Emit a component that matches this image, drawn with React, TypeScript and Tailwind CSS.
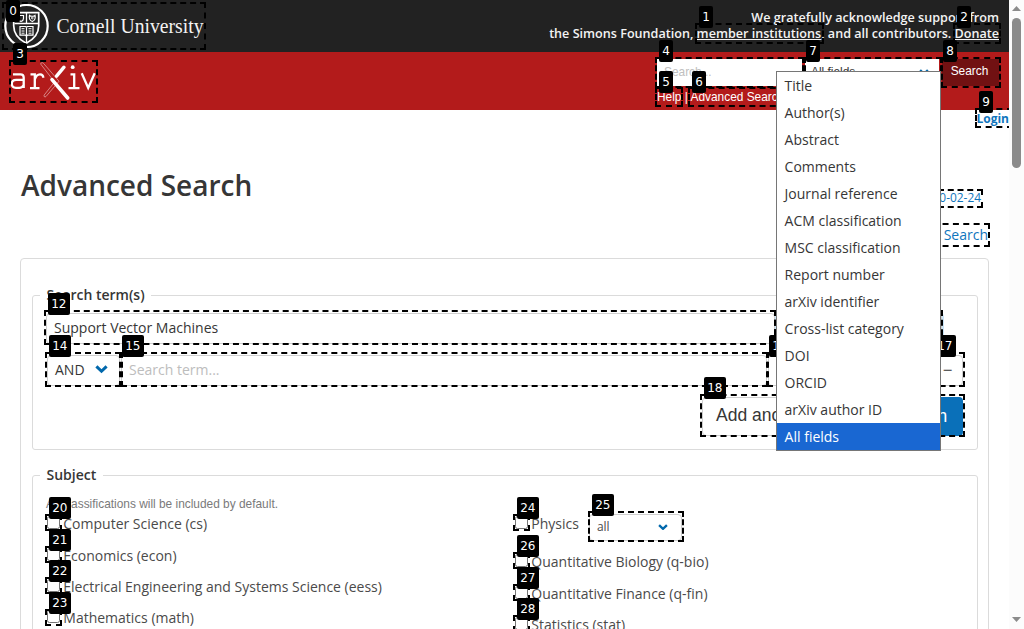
import React from "react";

type Mark = {
  id: number;
  box: [number, number, number, number];
  badge?: [number, number];
};

// box: left, top, right, bottom; badge: left, top
const marks: Mark[] = [
  { id: 0, box: [2, 2, 206, 50], badge: [6, 0] },
  { id: 1, box: [695, 23, 824, 44], badge: [699, 6] },
  { id: 2, box: [953, 23, 1001, 44], badge: [957, 6] },
  { id: 3, box: [9, 60, 98, 103], badge: [13, 43] },
  { id: 4, box: [655, 57, 804, 88], badge: [659, 40] },
  { id: 5, box: [655, 87, 683, 107], badge: [659, 71] },
  { id: 6, box: [688, 87, 786, 107], badge: [692, 71] },
  { id: 7, box: [804, 57, 942, 88], badge: [806, 40] },
  { id: 8, box: [941, 57, 1001, 88], badge: [943, 40] },
  { id: 9, box: [975, 108, 1013, 128], badge: [979, 91] },
  { id: 10, box: [860, 189, 983, 208] },
  { id: 11, box: [870, 223, 990, 247] },
  { id: 12, box: [44, 310, 776, 345], badge: [48, 293] },
  { id: 13, box: [774, 310, 943, 345] },
  { id: 14, box: [45, 352, 121, 387], badge: [49, 335] },
  { id: 15, box: [121, 352, 768, 387], badge: [122, 335] },
  { id: 16, box: [767, 352, 932, 387], badge: [769, 335] },
  { id: 17, box: [930, 352, 965, 387], badge: [934, 335] },
  { id: 18, box: [700, 394, 870, 437], badge: [704, 377] },
  { id: 19, box: [880, 394, 965, 437] },
  { id: 20, box: [45, 514, 62, 531], badge: [49, 497] },
  { id: 21, box: [45, 546, 62, 563], badge: [49, 529] },
  { id: 22, box: [45, 577, 62, 594], badge: [49, 560] },
  { id: 23, box: [45, 609, 62, 626], badge: [49, 592] },
  { id: 24, box: [513, 514, 530, 531], badge: [517, 497] },
  { id: 25, box: [588, 511, 684, 542], badge: [592, 494] },
  { id: 26, box: [513, 552, 530, 569], badge: [517, 535] },
  { id: 27, box: [513, 584, 530, 601], badge: [517, 567] },
  { id: 28, box: [513, 615, 530, 632], badge: [517, 598] },
];

const options = [
  "Title", "Author(s)", "Abstract", "Comments", "Journal reference",
  "ACM classification", "MSC classification", "Report number",
  "arXiv identifier", "Cross-list category", "DOI", "ORCID",
  "arXiv author ID", "All fields",
];

function Chevron({ size = 12 }: { size?: number }) {
  return (
    <svg width={size} height={(size * 8) / 12} viewBox="0 0 12 8" fill="none">
      <path d="M1.3 1.3 6 5.8l4.700-4.500" stroke="#0068ac" strokeWidth="2.8" />
    </svg>
  );
}

function CornellLogo() {
  return (
    <svg width="206" height="52" viewBox="0 0 206 52" className="shrink-0">
      <g fill="none" stroke="#fff">
        <circle cx="26.5" cy="26" r="21.2" strokeWidth="2.2" />
        <path d="M13.700 12.700h25v13c0 9-5.500 14-12.500 17.500-7-3.500-12.500-8.500-12.500-17.500z" strokeWidth="1.700" />
        <path d="M14.500 23.500h24M26.500 13v10M26.500 36v8" strokeWidth="1.300" />
        <path d="M20 26.500h5.500l1 .8 1-.8H33v8.700h-5.500l-1 .8-1-.8H20zM26.500 27v9" strokeWidth="1.200" />
        <path d="M21.500 28.700h3M21.500 31h3M21.500 33.200h3M28.500 28.700h3M28.500 31h3M28.500 33.200h3" strokeWidth="1" />
        <path d="M29.500 15.500c1 1 4.500 1 5.500 0 .8 3-.5 5-2.700 6-2.300-1-3.600-3-2.800-6zM18.500 15.500h5v3c0 1.500-1 2.500-2.500 3-1.500-.5-2.500-1.500-2.500-3z" strokeWidth="1.200" />
        <circle cx="32.300" cy="18" r=".9" strokeWidth=".9" />
      </g>
      <text x="56.500" y="33.200" fill="#f3f3f3" fontSize="21.500" textLength="147" lengthAdjust="spacingAndGlyphs" className="font-['Palatino_Linotype','Liberation_Serif',serif]">
        Cornell University
      </text>
    </svg>
  );
}

function ArxivLogo() {
  return (
    <svg width="90" height="44" viewBox="9 60 90 44" fill="none" stroke="#fff" className="shrink-0">
      <path d="M13 74.300h7.500q3.200 0 3.200 3.200V88M23.700 79.800h-7.500q-4.400 0-4.400 4t4.200 4h3.200q3 0 4.500-2.800" strokeWidth="2.300" />
      <path d="M30.500 74.300h4.300v13.600M30 88.200h9.500M34.800 79.500q1.500-5.200 5.200-5.200 3.200 0 3.300 3.500" strokeWidth="2.300" />
      <path d="M64 67.200 56.500 76.200" strokeWidth="3.400" strokeLinecap="round" />
      <path d="M52 79.700 67.700 98" strokeWidth="3.600" strokeLinecap="round" />
      <path d="M41.200 63c.8-.8 2 0 2.600.7L59 81.200 46 96.500c-1 1-2.700 0-1.800-1.500L54.600 82 41 64.500c-.4-.6-.3-1 .2-1.500z" strokeWidth=".7" opacity=".65" />
      <path d="M70.500 74.300h3.700v13.900M68.500 88.200h11M81.700 73.300l6.500 14.700 6.500-14.700" strokeWidth="2.300" />
      <circle cx="72.700" cy="67.200" r="1.900" fill="#fff" stroke="none" />
    </svg>
  );
}

function Check({ label }: { label: string }) {
  return (
    <label className="flex h-[31.400px] items-center whitespace-nowrap">
      <span className="mr-[3.300px] mb-[2px] h-[13px] w-[13px] shrink-0 rounded-[2.500px] border border-[#767676] bg-white" />
      {label}
    </label>
  );
}

const field = "flex items-center rounded-[4px] border border-[#cfcfcf] bg-white";

function Legend({ children }: { children: React.ReactNode }) {
  return (
    <legend className="ml-[7px] h-5 px-[6.500px] text-[14px] leading-5 font-semibold">{children}</legend>
  );
}

export default function App() {
  return (
    <div className="relative flex h-[629px] w-[1024px] overflow-hidden bg-white font-['Open_Sans','Noto_Sans',sans-serif] text-[14px] text-[#363636]">
      <div className="flex h-full w-[1009px] flex-col overflow-hidden">
        <div className="flex h-[52px] shrink-0 justify-between bg-[#222]">
          <CornellLogo />
          <div className="pt-[10px] pr-[10px] text-right text-[12.600px] leading-4 font-semibold whitespace-nowrap text-[#f3f3f3]">
            <div>We gratefully acknowledge support from</div>
            <div>
              the Simons Foundation, <span className="underline">member institutions</span>, and all contributors. <span className="underline">Donate</span>
            </div>
          </div>
        </div>

        <div className="flex h-[58px] shrink-0 justify-between bg-[#b31b1b] pt-2 pr-[10px] pl-[9px] font-['Liberation_Sans',sans-serif] text-[11.900px]">
          <ArxivLogo />
          <div className="-mt-px w-[342px]">
            <div className="flex h-[27px] gap-[3px]">
              <div className="flex w-[145px] items-center bg-white pl-[7px] text-[#c0c0c0]">Search...</div>
              <div className="flex w-[134px] items-center justify-between bg-white pr-[10px] pl-[6px]">All fields<Chevron size={10} /></div>
              <div className="flex flex-1 items-start justify-center bg-[#711112] pt-[4px] pr-[2px] text-white">Search</div>
            </div>
            <div className="pt-[3px] leading-4 text-white">Help | Advanced Search</div>
          </div>
        </div>

        <div className="flex h-[18px] shrink-0 justify-end text-[12px] leading-[18px] font-bold text-[#0f75bd]">Login</div>
        <div className="flex h-[130px] shrink-0 justify-between pr-[20px] pl-[21px]">
          <h1 className="pt-[37px] text-[28px] leading-[40px] font-semibold whitespace-nowrap">Advanced Search</h1>
          <div className="flex flex-col items-end pt-[60px] text-[#0f75bd]">
            <span className="pr-2 text-[11.900px] leading-[18px]">2020-02-24</span>
            <span className="pt-[19px] pr-px leading-[20px]">Simple Search</span>
          </div>
        </div>

        <div className="ml-5 h-[700px] w-[969px] shrink-0 rounded-t-[4px] border border-[#dbdbdb] pt-[26px] pr-[10px] pl-[11px]">
          <fieldset className="h-[165px] rounded-[3px] border border-[#dbdbdb]">
            <Legend>Search term(s)</Legend>
            <div className="flex flex-col pt-[7.500px] pl-[13px]">
              <div className="flex h-[31px] gap-[2px]">
                <div className={`${field} w-[729px] pb-px pl-[7px]`}>Support Vector Machines</div>
                <div className={`${field} w-[165px] shadow-[0_0_0_2px_#c9e3f5]`} />
              </div>
              <div className="mt-[11px] flex h-[31px] gap-px pl-px">
                <div className={`${field} w-[73px] justify-between pr-[11px] pb-px pl-[7px]`}>AND<Chevron size={13} /></div>
                <div className={`${field} w-[646px] pb-px pl-[7px] text-[#bdbdbd]`}>Search term...</div>
                <div className={`${field} w-[163px] pl-2`}>All fields</div>
                <div className={`${field} w-[31px] justify-center pb-px text-[17px]`}>−</div>
              </div>
              <div className="mt-[11px] flex h-[39px] justify-between pr-[14px] pl-[656px] font-['Liberation_Sans',sans-serif] text-[17.500px]">
                <div className={`${field} w-[160px] shrink-0 pb-px pl-[13px] whitespace-nowrap`}>Add another term</div>
                <div className="flex w-[87px] items-center justify-center rounded-[4px] bg-[#0a70b9] text-white">Search</div>
              </div>
            </div>
          </fieldset>
          <fieldset className="mt-[15px] h-[400px] rounded-[3px] border border-[#dbdbdb]">
            <Legend>Subject</Legend>
            <div className="pt-[9px] pl-[13px]">
              <div className="h-4 font-['Liberation_Sans',sans-serif] text-[11.900px] leading-5 text-[#7a7a7a]">All classifications will be included by default.</div>
              <div className="-mt-[2px] flex text-[#4a4a4a]">
                <div className="w-[468px] pl-px">
                  <Check label="Computer Science (cs)" />
                  <Check label="Economics (econ)" />
                  <Check label="Electrical Engineering and Systems Science (eess)" />
                  <Check label="Mathematics (math)" />
                </div>
                <div className="pl-px">
                  <div className="flex h-[38px]">
                    <Check label="Physics" />
                    <div className={`${field} mt-[5.500px] ml-[10px] h-[27px] w-[93px] justify-between pr-[13px] pl-[7px] text-[12px]`}>all<Chevron size={10} /></div>
                  </div>
                  <Check label="Quantitative Biology (q-bio)" />
                  <Check label="Quantitative Finance (q-fin)" />
                  <Check label="Statistics (stat)" />
                </div>
              </div>
            </div>
          </fieldset>
        </div>
      </div>

      <div className="pointer-events-none absolute top-0 left-0 h-[629px] w-[1009px] overflow-hidden">
        {marks.map(({ id, box: [l, t, r, b] }) => (
          <div key={id} className="absolute border-2 border-dashed border-black" style={{ left: l, top: t, width: r - l, height: b - t }} />
        ))}
        {marks.map(({ id, badge }) =>
          badge ? (
            <div key={id} className="absolute h-[22px] rounded-[2px] bg-black px-[3.200px] font-['DejaVu_Sans',sans-serif] text-[12px] leading-[22px] text-white" style={{ left: badge[0], top: badge[1] }}>
              {id}
            </div>
          ) : null
        )}
      </div>

      <ul className="absolute top-[71px] left-[776px] w-[165px] border border-[#767676] bg-white">
        {options.map((o) => (
          <li key={o} className={`h-[27px] pl-[7.600px] leading-[27px] ${o === "All fields" ? "bg-[#1967d2] text-white" : ""}`}>{o}</li>
        ))}
      </ul>

      <div className="flex h-full w-[15px] flex-col items-center justify-between bg-[#fcfcfc] pt-[6px] pb-[7px]">
        <svg width="9" height="5" viewBox="0 0 9 5"><path d="M4.500 0 9 5H0z" fill="#8b8b8b" /></svg>
        <div className="mt-[7px] mb-auto h-[150px] w-[9px] rounded-full bg-[#8b8b8b]" />
        <svg width="9" height="5" viewBox="0 0 9 5"><path d="M0 0h9L4.500 5z" fill="#8b8b8b" /></svg>
      </div>
    </div>
  );
}
